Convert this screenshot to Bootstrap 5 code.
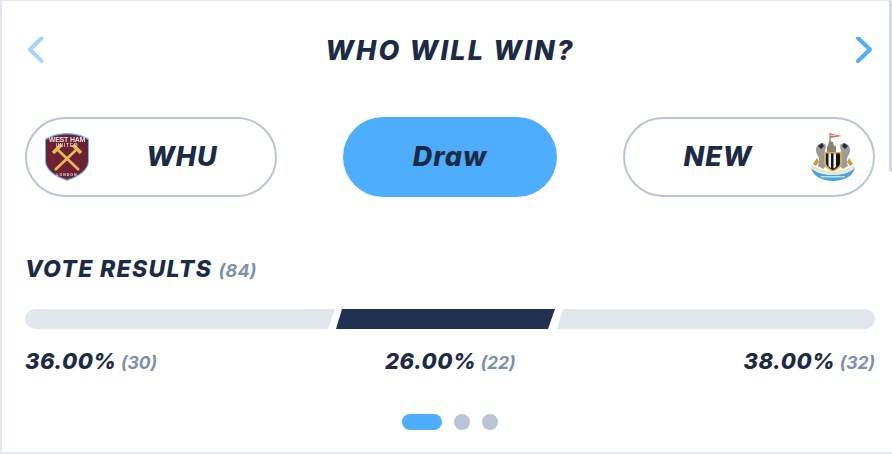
<!DOCTYPE html>
<html lang="en">
<head>
<meta charset="utf-8">
<title>Who will win?</title>
<link href="https://cdn.jsdelivr.net/npm/bootstrap@5.3.0/dist/css/bootstrap.min.css" rel="stylesheet">
<style>
html,body{height:454px;overflow:hidden;background:#fff}
body{font-family:"Inter","Liberation Sans",sans-serif;color:#1c2b45;font-style:italic}
.wg{width:892px;height:454px;background:#fff;border:solid #e1e6ef;border-width:1px 0 2px 2px;padding:0 17px 0 23px;position:relative}
.wg-scroll{position:absolute;right:0;top:0;width:3px;height:171px;background:#d5dbe5;border-bottom-left-radius:3px}
.wg-head{height:99px;padding-top:1px}
.wg-title{font-size:27px;font-weight:800;letter-spacing:2.200px;margin:0;color:#1c2b45}
.wg-choices{height:80px;margin-top:17px}
.pick{height:80px;border-radius:40px;font-size:27px;font-weight:800;letter-spacing:1px;color:#1c2b45}
.pick-team{width:252px;border:2px solid #b9c5d6;background:#fff}
.pick-home{padding:0 0 0 18px}
.pick-away{padding:0 18px 0 0}
.pick-draw{width:214px;background:#4fadfd}
.pick-name{flex:1;text-align:center}
.crest{filter:blur(.35px);flex:none}
.vote-title{font-size:23px;font-weight:800;letter-spacing:1.300px;margin:60px 0 0;line-height:24px}
.muted-count{color:#7b90ab;font-weight:700;font-size:18px;letter-spacing:.2px}
.bar-row{height:20px;margin-top:26px}
.seg{height:20px;background:#e1e6ec}
.seg-a{width:310px;border-radius:10px 0 0 10px;clip-path:polygon(0 0,100% 0,calc(100% - 7px) 100%,0 100%)}
.seg-b{width:219px;background:#20324f;margin-left:1px;clip-path:polygon(6px 0,100% 0,calc(100% - 7px) 100%,0 100%)}
.seg-c{flex:1;border-radius:0 10px 10px 0;margin-left:2px;clip-path:polygon(6px 0,100% 0,100% 100%,0 100%)}
.pct-row{margin-top:18px;font-size:22px;font-weight:800;letter-spacing:.5px;line-height:28px}
.pct-row .muted-count{font-size:17.500px;letter-spacing:0;margin-left:-1px}
.dots{margin-top:37px}
.dot-on{width:40px;height:16px;border-radius:8px;background:#4fadfd}
.dot-off{width:16px;height:16px;border-radius:50%;background:#b9c5d6}
</style>
</head>
<body>
<div class="wg">
  <div class="wg-scroll"></div>
  <div class="wg-head d-flex align-items-center justify-content-between">
    <svg width="20" height="28" viewBox="0 0 20 28" fill="none"><path d="M16.500 1 5 12.500 16.500 24" stroke="#a5d5fe" stroke-width="4" stroke-linecap="round" stroke-linejoin="round"/></svg>
    <h1 class="wg-title">WHO WILL WIN?</h1>
    <svg width="20" height="28" viewBox="0 0 20 28" fill="none"><path d="M3 1 15 12.500 3 24" stroke="#4fadfd" stroke-width="4" stroke-linecap="round" stroke-linejoin="round"/></svg>
  </div>
  <div class="wg-choices d-flex justify-content-between">
    <div class="pick pick-team pick-home d-flex align-items-center">
      <svg class="crest" width="44" height="48" viewBox="0 0 44 48"><path d="M0 6C6 2 14 0 22 0s16 2 22 6v22c0 9-10 16-22 20C10 44 0 37 0 28z" fill="#6fb7e6"/><path d="M1 7c6-4 13-5.500 21-5.500S37 3 43 7v21c0 8-9 15-21 18.500C10 43 1 36 1 28z" fill="#6d2234"/><g fill="none" stroke="#e8bb52" stroke-width="2.600"><path d="M13 17 34 37"/><path d="M31 17 10 37"/><path d="M8 20 16 12" stroke-width="3.500"/><path d="M36 20 28 12" stroke-width="3.500"/></g><text x="22" y="9" text-anchor="middle" font-family="Liberation Sans" font-size="7" font-weight="700" font-style="normal" fill="#f1dfe0" letter-spacing="-.2">WEST HAM</text><text x="22" y="14" text-anchor="middle" font-family="Liberation Sans" font-size="4.500" font-weight="700" font-style="normal" fill="#f1dfe0">UNITED</text><text x="22" y="43" text-anchor="middle" font-family="Liberation Sans" font-size="3.500" font-weight="700" font-style="normal" fill="#f1dfe0">LONDON</text></svg>
      <span class="pick-name">WHU</span>
    </div>
    <div class="pick pick-draw d-flex align-items-center justify-content-center">Draw</div>
    <div class="pick pick-team pick-away d-flex align-items-center">
      <span class="pick-name">NEW</span>
      <svg class="crest" width="44" height="50" viewBox="0 0 44 50"><path d="M19 12V1" stroke="#8a7f7a" stroke-width="1.200"/><path d="M19 1.500 31 4 25 5l-6 1z" fill="#d8666a"/><path d="M19 3h6v1h-6z" fill="#fff" opacity=".6"/><path d="M18 9l4 1 1 4h2v6h-9v-6h1z" fill="#8b8371"/><path d="M5 18c0-5 5-8 9-6 2 2 0 5 0 7l2 14-4 4-5-3c1-4 2-7 0-10-1-2-2-3-2-6z" fill="#9b9b98"/><path d="M39 18c0-5-5-8-9-6-2 2 0 5 0 7l-2 14 4 4 5-3c-1-4-2-7 0-10 1-2 2-3 2-6z" fill="#9b9b98"/><path d="M7 14l4-3 2 3-3 3zM37 14l-4-3-2 3 3 3z" fill="#2c2c2c"/><path d="M6 26 2 32l3 2 3-4zM38 26l4 6-3 2-3-4z" fill="#c99a3c"/><path d="M13 20h18v11c0 4-5 7-9 9-4-2-9-5-9-9z" fill="#d8ad45"/><path d="M15 21.500h14V31c0 3-4 5.500-7 7-3-1.500-7-4-7-7z" fill="#161616"/><path d="M17.500 21.500h2.500V36l-2.500-1.500zM22.500 21.500H25V35l-2.500 1.500z" fill="#f0f0f0"/><path d="M0 36c6 5 14 7 22 7s16-2 22-7c-2 8-11 13-22 13S2 44 0 36z" fill="#48a6df"/><path d="M1 33c6 4 13 6 21 6s15-2 21-6l1 3c-6 5-14 7-22 7S6 41 0 36z" fill="#ece6cb"/><rect x="10" y="44" width="24" height="1.500" fill="#d8ecf8" opacity=".8"/></svg>
    </div>
  </div>
  <h2 class="vote-title">VOTE RESULTS <span class="muted-count">(84)</span></h2>
  <div class="bar-row d-flex">
    <div class="seg seg-a"></div>
    <div class="seg seg-b"></div>
    <div class="seg seg-c"></div>
  </div>
  <div class="pct-row d-flex justify-content-between">
    <div>36.00% <span class="muted-count">(30)</span></div>
    <div>26.00% <span class="muted-count">(22)</span></div>
    <div>38.00% <span class="muted-count">(32)</span></div>
  </div>
  <div class="dots d-flex justify-content-center align-items-center gap-2">
    <span class="dot-on me-1"></span><span class="dot-off"></span><span class="dot-off ms-1"></span>
  </div>
</div>
</body>
</html>
